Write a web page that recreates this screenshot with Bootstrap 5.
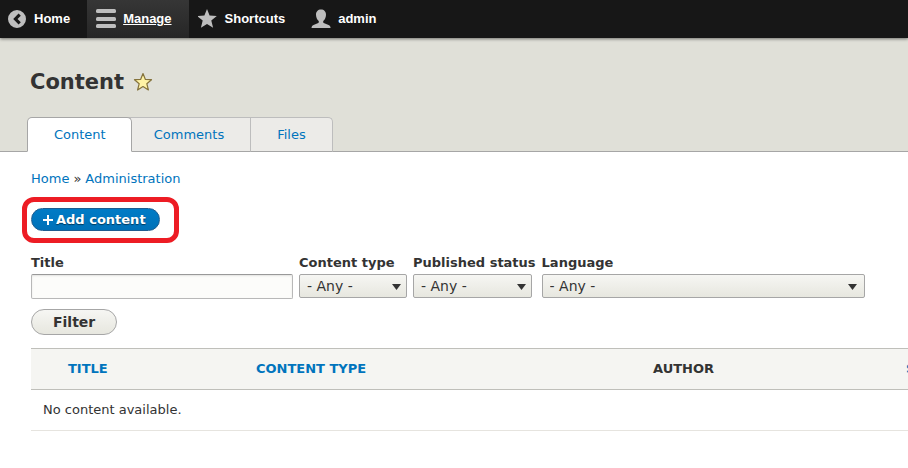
<!DOCTYPE html>
<html lang="en">
<head>
<meta charset="utf-8">
<meta name="viewport" content="width=device-width, initial-scale=1">
<title>Content</title>
<link rel="stylesheet" href="https://cdn.jsdelivr.net/npm/bootstrap@5.3.0/dist/css/bootstrap.min.css">
<style>
body { font: 13px/20px "DejaVu Sans", Verdana, sans-serif; color: #333; background: #fff; overflow-x: hidden; }
a { color: #0074bd; text-decoration: none; }
.admin-bar { background: #171717; box-shadow: 0 1px 3px rgba(0,0,0,.5); font: bold 13px/18px "Liberation Sans", Arial, sans-serif; position: relative; }
.admin-bar a { color: #fff; height: 38px; gap: 7px; }
.admin-bar svg { fill: #bebebe; width: 20px; height: 20px; flex: none; }
.bar-home { padding: 0 17px 0 7px; }
.bar-item { padding: 0 17px 0 9px; }
.bar-item.active { background: linear-gradient(#363636, #262626); }
.bar-item.active span { text-decoration: underline; }
.region-head { background: #e0e0d8; padding: 32px 30px 0; border-bottom: 1px solid #a6a6a6; }
h1 { font-size: 21px; line-height: 24px; font-weight: bold; gap: 9px; color: #333; }
.star-btn { line-height: 0; }
.page-tabs { margin: 23px 0 -1px -3px; }
.page-tabs a { display: block; background: #ecebe8; border: 1px solid #bdbdbd; border-bottom-color: #a6a6a6; padding: 7px 26px 6px 26px; height: 35px; }
.page-tabs li + li { margin-left: -5px; }
.page-tabs li + li + li { margin-left: -1px; }
.page-tabs li:last-child a { border-top-right-radius: 5px; }
.page-tabs a.active { position: relative; z-index: 1; padding-right: 25px; background: #fff; border-color: #a6a6a6 #a6a6a6 #fff; border-radius: 5px 5px 0 0; }
main { padding: 17px 0 20px 31px; }
.crumbs { gap: 4px; }
.action-row { margin-top: 19px; }
.add-btn { height: 23px; padding: 0 13px 0 11px; line-height: 20px; color: #fff; font-weight: bold; font-size: 13px; border: 1px solid #1e5c90; border-radius: 20px; background: linear-gradient(#007bc6, #0071b8); text-shadow: 0 1px 1px rgba(0,0,0,.5); gap: 3px; }
.highlight-box { position: absolute; inset: -11px -19px -12px -9px; border: 5px solid #ed1c24; border-radius: 12px; pointer-events: none; }
.filters { gap: 6px; margin-top: 22px; }
.filters label { display: block; font-weight: bold; line-height: 20px; white-space: nowrap; margin-bottom: 1px; }
.filters .form-control { width: 262px; height: 25px; border: 1px solid #b8b8b8; border-top-color: #999; border-radius: 2px; background: #fcfcfa; padding: 2px 8px; box-shadow: inset 0 1px 2px rgba(0,0,0,.1); font-size: 14px; }
.filters .form-select { height: 24px; padding: 0 20px 0 7px; font-size: 14px; line-height: 20px; color: #333; border: 1px solid #a6a6a6; border-radius: 2px; background: url("data:image/svg+xml,%3Csvg xmlns='http://www.w3.org/2000/svg' viewBox='0 0 16 6'%3E%3Cpath fill='%23333' d='M3 0h9L7.500 6z'/%3E%3C/svg%3E") 99% 9px / 16px 6px no-repeat, linear-gradient(#f6f6f3, #e7e7df); }
.w-type { width: 108px; }
.w-status { width: 119px; }
.w-lang { width: 323px; }
.filter-btn { height: 26px; margin-top: 10px; padding: 0 21px; font-size: 14px; line-height: 22px; font-weight: bold; color: #333; border: 1px solid #a6a6a6; border-radius: 20px; background: linear-gradient(#f6f6f3, #e7e7df); }
.table-clip { margin-top: 13px; overflow: hidden; }
.listing { table-layout: fixed; width: 1160px; margin: 0; color: #333; }
.listing > thead > tr > th { background: #f5f5f2; border: solid #bfbfba; border-width: 1px 0; padding: 10px 12px; text-transform: uppercase; color: #333; }
.listing > tbody > tr > td { padding: 10px 12px; border-bottom: 1px solid #e6e4df; color: #333; }
.c-check { width: 25px; } .c-title { width: 188px; } .c-type { width: 397px; } .c-author { width: 253px; }
</style>
<script src="https://cdn.jsdelivr.net/npm/bootstrap@5.3.0/dist/js/bootstrap.bundle.min.js"></script>
</head>
<body>
<nav class="admin-bar d-flex" aria-label="Administration toolbar">
  <a href="#" class="bar-home d-flex align-items-center"><svg viewBox="0 0 20 20"><path fill-rule="evenodd" d="M10 1a9 9 0 1 0 0 18 9 9 0 0 0 0-18zm1.600 3.600 2.200 2.200L10.500 10l3.300 3.200-2.200 2.200L6.200 10z"/></svg><span>Home</span></a>
  <a href="#" class="bar-item active d-flex align-items-center"><svg viewBox="0 0 20 20"><rect y="0" width="20" height="4" rx="1.500"/><rect y="8" width="20" height="4" rx="1.500"/><rect y="15" width="20" height="4" rx="1.500"/></svg><span>Manage</span></a>
  <a href="#" class="bar-item d-flex align-items-center"><svg viewBox="0 0 20 20"><path d="M9 0l2.600 6.500 7.200.5-5.500 4.600 1.800 7.200L9 15l-6.100 3.800 1.800-7.200L-.8 7l7.200-.5z"/></svg><span>Shortcuts</span></a>
  <a href="#" class="bar-item d-flex align-items-center"><svg viewBox="0 0 20 20"><path d="M10 .5c3 0 5 2 5 5.200 0 2.600-1.100 4.700-2.500 6.100-.5.600-.5 1.900.2 2.300l4.900 2c1.200.5 1.900 1.500 2 2.900H.500c.1-1.400.8-2.400 2-2.900l4.800-2c.7-.4.700-1.700.2-2.300C6.100 10.400 5 8.300 5 5.700 5 2.500 7 .5 10 .5z"/></svg><span>admin</span></a>
</nav>
<header class="region-head">
  <h1 class="d-flex align-items-center m-0">Content
    <button type="button" class="star-btn btn p-0 border-0" aria-label="Add to shortcuts"><svg width="20" height="20" viewBox="0 0 20 20"><path d="M10 1.500l2.400 5.900 6.100.300-4.700 4 1.600 6.300-5.400-3.500L4.600 18l1.600-6.300-4.700-4 6.100-.300z" fill="#fff3a5" stroke="#85733c" stroke-width="1.200" stroke-linejoin="round"/></svg></button>
  </h1>
  <ul class="page-tabs list-unstyled d-flex">
    <li><a href="#" class="active" aria-current="page">Content</a></li>
    <li><a href="#">Comments</a></li>
    <li><a href="#">Files</a></li>
  </ul>
</header>
<main>
  <nav class="crumbs d-flex" aria-label="Breadcrumb"><a href="#">Home</a><span>»</span><a href="#">Administration</a></nav>
  <div class="action-row d-flex">
    <div class="position-relative">
      <a href="#" class="add-btn d-flex align-items-center"><svg width="10" height="10" viewBox="0 0 10 10" aria-hidden="true"><path d="M4 0h2v4h4v2H6v4H4V6H0V4h4z" fill="#fff"/></svg>Add content</a>
      <span class="highlight-box"></span>
    </div>
  </div>
  <form>
    <div class="filters d-flex align-items-start">
      <div><label for="f-title">Title</label><input id="f-title" type="text" class="form-control"></div>
      <div class="w-type"><label for="f-type">Content type</label><select id="f-type" class="form-select w-type"><option>- Any -</option></select></div>
      <div><label for="f-status">Published status</label><select id="f-status" class="form-select w-status"><option>- Any -</option></select></div>
      <div><label for="f-lang">Language</label><select id="f-lang" class="form-select w-lang"><option>- Any -</option></select></div>
    </div>
    <button type="button" class="filter-btn btn">Filter</button>
  </form>
  <div class="table-clip">
    <table class="listing table">
      <colgroup><col class="c-check"><col class="c-title"><col class="c-type"><col class="c-author"><col></colgroup>
      <thead><tr><th></th><th><a href="#">Title</a></th><th><a href="#">Content type</a></th><th>Author</th><th><a href="#">Status</a></th></tr></thead>
      <tbody><tr><td colspan="5">No content available.</td></tr></tbody>
    </table>
  </div>
</main>
</body>
</html>
